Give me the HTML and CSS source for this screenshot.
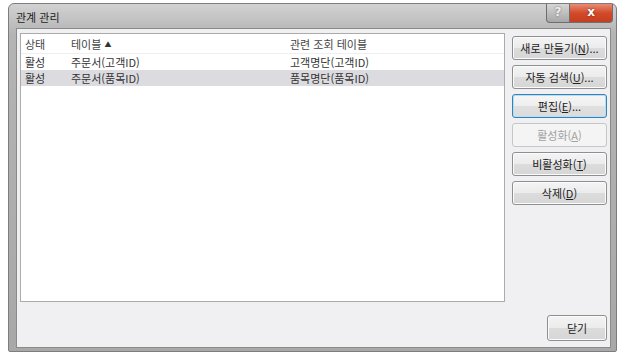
FILE: index.html
```html
<!DOCTYPE html>
<html lang="ko">
<head>
  <meta charset="UTF-8" />
  <title>관계 관리</title>
  <link rel="stylesheet" href="styles.css">
</head>

<body>
  <div class="window">
    <div class="titlebar">
      <span class="title">관계 관리</span>
      <div class="caption-buttons">
        <span class="cap help">?</span>
        <span class="cap close-x">x</span>
      </div>
    </div>

    <div class="client">
      <div class="main">
        <div class="list">
          <div class="row head">
            <span class="c1">상태</span>
            <span class="c2">테이블 <span class="sort">&#9650;</span></span>
            <span class="c3">관련 조회 테이블</span>
          </div>
          <div class="row">
            <span class="c1">활성</span>
            <span class="c2">주문서(고객ID)</span>
            <span class="c3">고객명단(고객ID)</span>
          </div>
          <div class="row selected">
            <span class="c1">활성</span>
            <span class="c2">주문서(품목ID)</span>
            <span class="c3">품목명단(품목ID)</span>
          </div>
        </div>

        <div class="side">
          <button class="btn">새로 만들기(<u>N</u>)...</button>
          <button class="btn">자동 검색(<u>U</u>)...</button>
          <button class="btn focus">편집(<u>E</u>)...</button>
          <button class="btn" disabled>활성화(<u>A</u>)</button>
          <button class="btn">비활성화(<u>T</u>)</button>
          <button class="btn">삭제(<u>D</u>)</button>
        </div>
      </div>

      <div class="footer">
        <button class="btn close-btn">닫기</button>
      </div>
    </div>
  </div>
</body>
</html>
```

FILE: styles.css
```css
body {
  margin: 0;
  padding: 0;
  background: #fff;
  font-family: "Noto Sans CJK KR", "Noto Sans", sans-serif;
  font-size: 11px;
  color: #222;
}
.window {
  margin: 3px 0 0 8px;
  width: 609px;
  height: 349px;
  box-sizing: border-box;
  display: flex;
  flex-direction: column;
  padding: 0 5px 3px 7px;
  border: 1px solid #7d7d7d;
  border-radius: 6px 6px 2px 2px;
  background: linear-gradient(#d2d2d2, #b4b4b4 30px, #a8a8a8);
}
.titlebar {
  height: 24px;
  display: flex;
  align-items: flex-start;
  justify-content: space-between;
}
.title {
  margin-top: 5px;
  color: #1e1e1e;
  font-size: 11px;
}
.caption-buttons {
  display: flex;
  margin-right: -2px;
}
.cap {
  height: 18px;
  line-height: 17px;
  text-align: center;
  color: #fff;
  font-family: "DejaVu Sans", sans-serif;
  font-weight: bold;
  font-size: 12px;
  border: 1px solid #6e6e6e;
  border-top: none;
}
.help {
  width: 22px;
  background: linear-gradient(#d6d6d6, #a7a7a7);
  border-radius: 0 0 0 4px;
  color: #eee;
  text-shadow: 0 0 2px #666;
}
.close-x {
  width: 42px;
  border-left: none;
  background: linear-gradient(#e88d74, #d24a2a 50%, #c53e1f);
  border-radius: 0 0 4px 0;
  text-shadow: 0 0 2px #6a1a0a;
}
.client {
  flex: 1;
  background: #f0eff2;
  border: 1px solid #8a8a8a;
  display: flex;
  flex-direction: column;
  padding: 4px 3px 6px 3px;
}
.main {
  display: flex;
  gap: 7px;
}
.list {
  width: 488px;
  height: 265px;
  background: #fff;
  border: 1px solid #ababab;
  padding-top: 2px;
}
.row {
  display: flex;
  height: 16px;
  line-height: 16px;
  color: #333;
}
.row.head {
  height: 17px;
  color: #444;
  border-bottom: 1px solid #efefef;
}
.row.selected {
  background: #dcdce0;
}
.c1 { width: 46px; padding-left: 4px; }
.c2 { width: 219px; }
.sort {
  font-size: 7px;
  vertical-align: 2px;
  color: #333;
}
.side {
  display: flex;
  flex-direction: column;
  gap: 5px;
  padding-top: 3px;
}
.btn {
  width: 95px;
  height: 24px;
  font-family: "Noto Sans CJK KR", "Noto Sans", sans-serif;
  font-size: 11px;
  color: #222;
  border: 1px solid #8e8f8f;
  border-radius: 3px;
  background: linear-gradient(#f4f4f4, #ebebeb 50%, #dcdcdc 51%, #d6d6d6);
  box-shadow: inset 0 0 0 1px #fbfbfb;
  padding: 0;
}
.btn.focus {
  border-color: #3c7fb1;
  box-shadow: inset 0 0 0 1px #aee0fb;
  background: linear-gradient(#f6f6f6, #eeeeee 50%, #e0e0e0 51%, #dbdbdb);
}
.btn:disabled {
  color: #a0a0a0;
  border-color: #c6c6c6;
  background: #f4f4f4;
  box-shadow: none;
}
.footer {
  margin-top: auto;
  display: flex;
  justify-content: flex-end;
}
.close-btn {
  width: 60px;
  height: 26px;
}
```
